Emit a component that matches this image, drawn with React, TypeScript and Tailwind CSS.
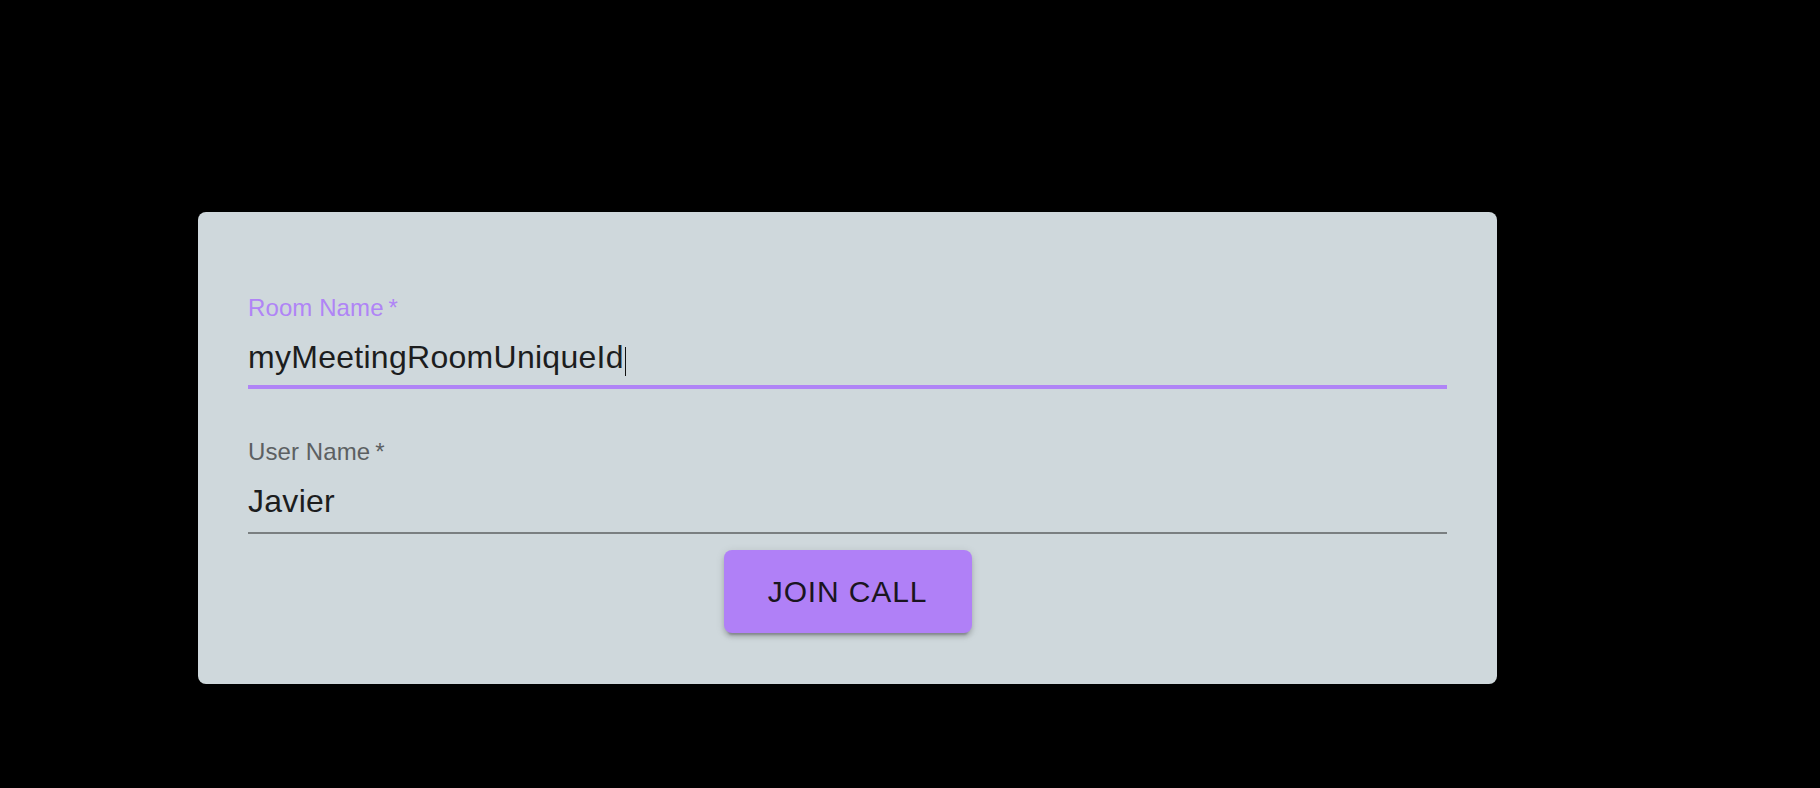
import React from "react";

export default function App() {
  return (
    <div className="w-full h-[788px] bg-black overflow-hidden font-['Liberation_Sans',Arial,sans-serif]">
      <div className="ml-[198px] pt-[212px] w-[1299px]">
        <div className="h-[472px] rounded-lg bg-[#cfd8dc] px-[50px] pt-[84px]">
          {/* Room Name field */}
          <div>
            <div className="h-[24px] text-[24px] leading-[24px] tracking-[0.1px] text-[#b084f6]">
              Room Name{"\u2009"}*
            </div>
            <div className="mt-[21px] h-[48px] border-b-[4px] border-[#b084f6]">
              <span className="text-[32px] leading-[32px] tracking-[0.28px] text-[#1c1d1e] whitespace-nowrap">
                myMeetingRoomUniqueId
                <span className="inline-block w-[1.5px] h-[29px] bg-[#111] align-[-8px] ml-[1px]" />
              </span>
            </div>
          </div>
          {/* User Name field */}
          <div className="mt-[51px]">
            <div className="h-[24px] text-[24px] leading-[24px] tracking-[0.1px] text-[#5c6062]">
              User Name{"\u2009"}*
            </div>
            <div className="mt-[21px] h-[49px] border-b-[2px] border-[#7a7f81]">
              <span className="text-[32px] leading-[32px] tracking-[0.28px] text-[#1c1d1e]">Javier</span>
            </div>
          </div>
          <div className="mt-[16px] flex justify-center">
            <button className="w-[248px] h-[83px] rounded-[8px] bg-[#b080f7] text-[30px] leading-[30px] tracking-[0.86px] text-[#1a1520] flex items-center justify-center shadow-[0_6px_2px_-4px_rgba(0,0,0,0.2),0_4px_4px_0_rgba(0,0,0,0.14),0_2px_10px_0_rgba(0,0,0,0.12)]">
              JOIN CALL
            </button>
          </div>
        </div>
      </div>
    </div>
  );
}
